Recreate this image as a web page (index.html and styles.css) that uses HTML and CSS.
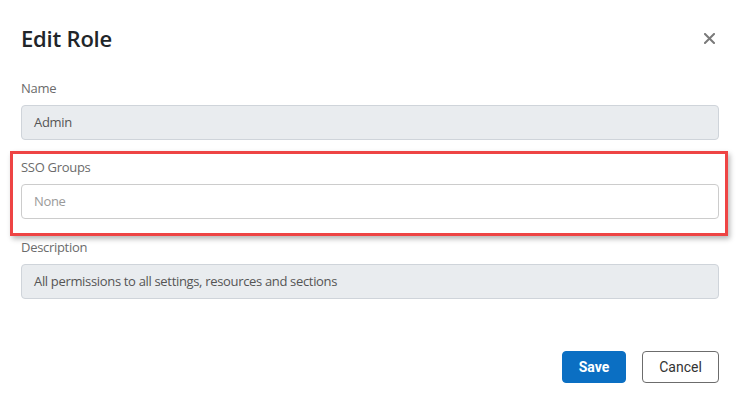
FILE: index.html
```html
<!DOCTYPE html>
<html>
<head>
<meta charset="utf-8">
<link rel="stylesheet" href="styles.css">
</head>
<body>
<div class="modal">
  <div class="header">
    <h1 class="title">Edit Role</h1>
    <button class="close" aria-label="Close">
      <svg width="11" height="11" viewBox="0 0 11 11"><path d="M1 1L10 10M10 1L1 10" stroke="#7a7a7a" stroke-width="2" stroke-linecap="square"/></svg>
    </button>
  </div>
  <div class="body">
    <div class="field">
      <label class="label">Name</label>
      <div class="input disabled">Admin</div>
    </div>
    <div class="field highlight">
      <label class="label">SSO Groups</label>
      <div class="input placeholder">None</div>
    </div>
    <div class="field">
      <label class="label">Description</label>
      <div class="input disabled">All permissions to all settings, resources and sections</div>
    </div>
    <div class="footer">
      <button class="btn btn-primary">Save</button>
      <button class="btn btn-secondary">Cancel</button>
    </div>
  </div>
</div>
</body>
</html>
```
FILE: styles.css
```css
* { box-sizing: border-box; }
html, body { margin: 0; padding: 0; background: #fff; }
body { font-family: "Open Sans", "Noto Sans", sans-serif; color: #222; }
.modal { width: 743px; height: 403px; }
.header {
  display: flex;
  justify-content: space-between;
  align-items: flex-start;
  padding: 24px 24px 0 21px;
  height: 79px;
}
.title {
  margin: 0;
  font-size: 22px;
  line-height: 28px;
  font-weight: 600;
  letter-spacing: -0.2px;
  color: #212529;
}
.close {
  border: 0;
  background: none;
  padding: 0;
  margin: 9px 4px 0 0;
  width: 11px;
  height: 11px;
  display: flex;
}
.body {
  display: flex;
  flex-direction: column;
  padding: 0 24px 0 21px;
}
.field { margin-bottom: 18px; }
.label {
  display: block;
  font-size: 13px;
  line-height: 18px;
  color: #6b6b6b;
  letter-spacing: -0.3px;
  margin-bottom: 8px;
}
.input {
  height: 35px;
  border: 1px solid #cfd4da;
  border-radius: 4px;
  padding: 0 12px;
  font-size: 13px;
  line-height: 33px;
  letter-spacing: -0.33px;
  color: #555;
  background: #fff;
}
.input.disabled { background: #e9ecef; }
.input.placeholder { color: #9a9a9a; border-color: #cccccc; }
.highlight {
  margin: -7px -9px 2px -11px;
  padding: 4px 6px 14px 8px;
  border: 3px solid #ee4444;
  box-shadow: 2px 3px 5px rgba(0,0,0,0.28);
}
.footer {
  display: flex;
  justify-content: flex-end;
  gap: 16px;
  margin-top: 34px;
}
.btn {
  height: 32px;
  border-radius: 4px;
  font-family: Roboto, "Noto Sans", sans-serif;
  font-size: 14px;
  cursor: pointer;
}
.btn-primary {
  width: 64px;
  background: #0b6fc3;
  border: 1px solid #0b6fc3;
  color: #fff;
  font-weight: 700;
}
.btn-secondary {
  width: 77px;
  background: #fff;
  border: 1px solid #6c6c6c;
  color: #333;
}
```
